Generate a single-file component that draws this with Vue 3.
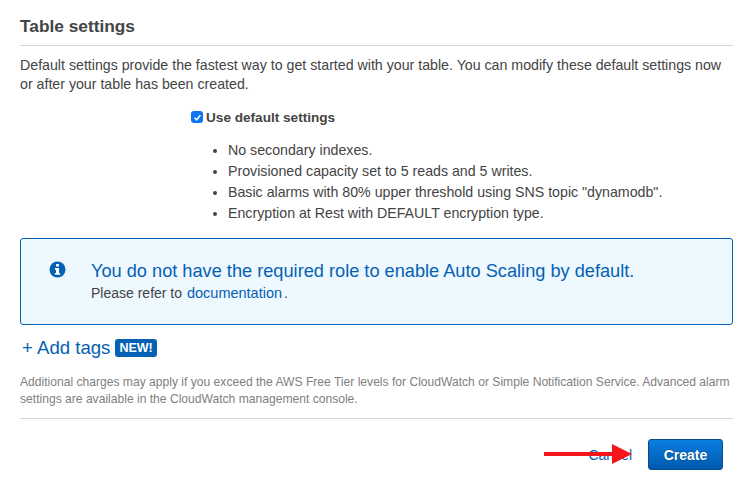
<script setup>
const bullets = [
  'No secondary indexes.',
  'Provisioned capacity set to 5 reads and 5 writes.',
  'Basic alarms with 80% upper threshold using SNS topic "dynamodb".',
  'Encryption at Rest with DEFAULT encryption type.',
]
</script>

<template>
  <div class="page">
    <h2 class="title">Table settings</h2>
    <p class="intro">
      Default settings provide the fastest way to get started with your table. You can modify these default settings now<br>or after your table has been created.
    </p>

    <div class="defaults">
      <label class="check">
        <span class="box">
          <svg width="9" height="9" viewBox="0 0 9 9"><path d="M1.6 4.8 3.6 6.8 7.4 2.2" fill="none" stroke="#fff" stroke-width="1.6"/></svg>
        </span>
        Use default settings
      </label>
      <ul class="list">
        <li v-for="b in bullets" :key="b">{{ b }}</li>
      </ul>
    </div>

    <div class="notice">
      <svg class="info" width="17" height="17" viewBox="0 0 17 17">
        <circle cx="8.5" cy="8.5" r="8" fill="#0561b3"/>
        <rect x="7" y="3" width="3" height="2.6" rx="0.5" fill="#fff"/>
        <path d="M5.9 7h4.1v5h1.1v1.7H5.9V12H7V8.7H5.9z" fill="#fff"/>
      </svg>
      <div>
        <div class="notice-title">You do not have the required role to enable Auto Scaling by default.</div>
        <div class="notice-text">Please refer to <a class="doc">documentation</a><span class="dot">.</span></div>
      </div>
    </div>

    <div class="tags">
      <a class="add">+ Add tags</a>
      <span class="badge">NEW!</span>
    </div>

    <p class="fine">
      Additional charges may apply if you exceed the AWS Free Tier levels for CloudWatch or Simple Notification Service. Advanced alarm<br>settings are available in the CloudWatch management console.
    </p>

    <div class="footer">
      <a class="cancel">Cancel
        <svg class="arrow" width="90" height="24" viewBox="0 0 90 24">
          <rect x="0" y="10" width="68" height="4" fill="#f5161a"/>
          <path d="M68 2 88 12 68 22z" fill="#f5161a"/>
        </svg>
      </a>
      <button class="create">Create</button>
    </div>
  </div>
</template>

<style scoped>
.page {
  width: 753px;
  height: 478px;
  box-sizing: border-box;
  padding: 16px 20px 0;
  overflow: hidden;
  background: #fff;
  color: #444;
  font-family: "Liberation Sans", Arial, sans-serif;
  font-size: 14px;
}
.title {
  margin: 0;
  padding-bottom: 9px;
  border-bottom: 1px solid #d5d5d5;
  font-size: 17.3px;
  line-height: 20px;
  font-weight: 700;
  color: #444;
}
.intro {
  margin: 10px 0 0;
  line-height: 19px;
  font-size: 14.2px;
}
.defaults {
  margin-left: 171px;
  margin-top: 13px;
}
.check {
  display: flex;
  align-items: center;
  gap: 3px;
  height: 20px;
  font-weight: 700;
  font-size: 13.6px;
}
.box {
  width: 12px;
  height: 12px;
  border-radius: 3px;
  background: #0b76f0;
  display: flex;
  align-items: center;
  justify-content: center;
}
.list {
  margin: 13px 0 0;
  padding-left: 37px;
  line-height: 21px;
  font-size: 14.2px;
}
.notice {
  margin-top: 14px;
  height: 87px;
  box-sizing: border-box;
  border: 1px solid #0561b3;
  border-radius: 3px;
  background: #edf8ff;
  display: flex;
  padding: 22px 0 0 28px;
  gap: 25px;
}
.info {
  flex: none;
}
.notice-title {
  font-size: 18.2px;
  line-height: 20px;
  color: #0561b3;
}
.notice-text {
  margin-top: 3px;
  line-height: 18px;
  font-size: 14px;
  color: #444;
}
.doc {
  margin-left: 1px;
  font-size: 14.5px;
  color: #0561b3;
}
.dot {
  margin-left: 2px;
}
.tags {
  margin-top: 13px;
  margin-left: 2px;
  display: flex;
  align-items: center;
  gap: 5px;
  height: 20px;
}
.add {
  font-size: 18.6px;
  color: #0561b3;
}
.badge {
  background: #0561b3;
  color: #fff;
  font-size: 12.5px;
  font-weight: 700;
  line-height: 18px;
  padding: 0 4px;
  border-radius: 3px;
}
.fine {
  margin: 16px 0 0;
  padding-bottom: 10px;
  border-bottom: 1px solid #d5d5d5;
  font-size: 12.1px;
  line-height: 17px;
  color: #808080;
}
.footer {
  margin-top: 20px;
  padding-right: 10px;
  display: flex;
  justify-content: flex-end;
  align-items: center;
  gap: 16px;
}
.cancel {
  position: relative;
  color: #0561b3;
}
.arrow {
  position: absolute;
  left: -44px;
  top: -5px;
}
.create {
  width: 75px;
  height: 31px;
  border: 1px solid #0a4a8c;
  border-radius: 3px;
  background: linear-gradient(#0a7ee0, #0059ad);
  color: #fff;
  font-family: inherit;
  font-size: 14px;
  font-weight: 700;
  text-shadow: 0 0 2px rgba(0,0,0,.4);
}
</style>
